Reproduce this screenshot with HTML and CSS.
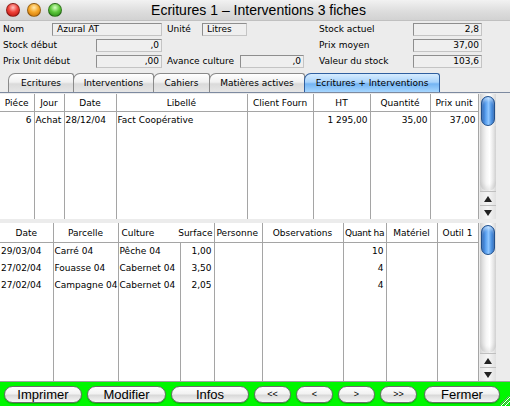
FILE: index.html
```html
<!DOCTYPE html>
<html>
<head>
<meta charset="utf-8">
<link rel="stylesheet" href="styles.css">
</head>
<body>
<div class="window">
  <div class="titlebar">
    <div class="lights">
      <span class="light red"></span>
      <span class="light yellow"></span>
      <span class="light green"></span>
    </div>
    <div class="title">Ecritures 1 – Interventions 3 fiches</div>
  </div>

  <div class="form">
    <span class="lbl r1 c-nom">Nom</span>
    <span class="fld r1 f-nom">Azural AT</span>
    <span class="lbl r1 c-unite">Unité</span>
    <span class="fld r1 f-unite">Litres</span>
    <span class="lbl r1 c-right">Stock actuel</span>
    <span class="fld num r1 f-right">2,8</span>

    <span class="lbl r2 c-left2">Stock début</span>
    <span class="fld num r2 f-left2">,0</span>
    <span class="lbl r2 c-right">Prix moyen</span>
    <span class="fld num r2 f-right">37,00</span>

    <span class="lbl r3 c-left2">Prix Unit début</span>
    <span class="fld num r3 f-left2">,00</span>
    <span class="lbl r3 c-avance">Avance culture</span>
    <span class="fld num r3 f-avance">,0</span>
    <span class="lbl r3 c-right">Valeur du stock</span>
    <span class="fld num r3 f-right">103,6</span>
  </div>

  <div class="tabs">
    <span class="tab t1">Ecritures</span>
    <span class="tab t2">Interventions</span>
    <span class="tab t3">Cahiers</span>
    <span class="tab t4">Matières actives</span>
    <span class="tab t5 active">Ecritures + Interventions</span>
  </div>

  <div class="pane pane-top">
    <table class="grid">
      <colgroup>
        <col style="width:34px"><col style="width:30px"><col style="width:52px"><col style="width:131px">
        <col style="width:66px"><col style="width:57px"><col style="width:60px"><col style="width:48px">
      </colgroup>
      <thead>
        <tr><th>Piéce</th><th>Jour</th><th>Date</th><th>Libellé</th><th>Client Fourn</th><th>HT</th><th>Quantité</th><th>Prix unit</th></tr>
      </thead>
      <tbody>
        <tr><td class="n">6</td><td>Achat</td><td>28/12/04</td><td>Fact Coopérative</td><td></td><td class="n">1 295,00</td><td class="n">35,00</td><td class="n">37,00</td></tr>
        <tr class="fill"><td></td><td></td><td></td><td></td><td></td><td></td><td></td><td></td></tr>
      </tbody>
    </table>
    <div class="scroll">
      <div class="thumb"></div>
      <div class="track"></div>
      <div class="arrow up"></div>
      <div class="arrow down"></div>
    </div>
  </div>

  <div class="pane pane-bottom">
    <table class="grid">
      <colgroup>
        <col style="width:53px"><col style="width:65px"><col style="width:62px"><col style="width:34px"><col style="width:48px">
        <col style="width:81px"><col style="width:43px"><col style="width:51px"><col style="width:41px">
      </colgroup>
      <thead>
        <tr><th>Date</th><th>Parcelle</th><th colspan="2" class="split"><span>Culture</span><span>Surface</span></th><th class="l">Personne</th><th>Observations</th><th class="q">Quant ha</th><th>Matériel</th><th>Outil 1</th></tr>
      </thead>
      <tbody>
        <tr><td>29/03/04</td><td>Carré 04</td><td>Pêche 04</td><td class="n">1,00</td><td></td><td></td><td class="n">10</td><td></td><td></td></tr>
        <tr><td>27/02/04</td><td>Fouasse 04</td><td>Cabernet 04</td><td class="n">3,50</td><td></td><td></td><td class="n">4</td><td></td><td></td></tr>
        <tr><td>27/02/04</td><td>Campagne 04</td><td>Cabernet 04</td><td class="n">2,05</td><td></td><td></td><td class="n">4</td><td></td><td></td></tr>
        <tr class="fill"><td></td><td></td><td></td><td></td><td></td><td></td><td></td><td></td><td></td></tr>
      </tbody>
    </table>
    <div class="scroll">
      <div class="thumb"></div>
      <div class="track"></div>
      <div class="arrow up"></div>
      <div class="arrow down"></div>
    </div>
  </div>

  <div class="toolbar">
    <span class="btn w-big">Imprimer</span>
    <span class="btn w-big2">Modifier</span>
    <span class="btn w-big">Infos</span>
    <span class="btn w-nav">&lt;&lt;</span>
    <span class="btn w-nav">&lt;</span>
    <span class="btn w-nav">&gt;</span>
    <span class="btn w-nav">&gt;&gt;</span>
    <span class="btn w-close">Fermer</span>
  </div>

  <svg class="grip" width="13" height="13" viewBox="0 0 13 13">
    <path d="M12 3 L3 12 M12 7 L7 12 M12 11 L11 12" stroke="#8a8a8a" stroke-width="1"/>
    <path d="M13 4 L4 13 M13 8 L8 13" stroke="#ffffff" stroke-width="1"/>
  </svg>
</div>
</body>
</html>
```

FILE: styles.css
```css
* { box-sizing: border-box; }
html, body { margin: 0; padding: 0; }
body {
  width: 510px;
  height: 406px;
  overflow: hidden;
  background: #ececec;
  font-family: "DejaVu Sans", "Liberation Sans", sans-serif;
  font-size: 9px;
  color: #000;
}
.window {
  position: relative;
  width: 510px;
  height: 406px;
  display: flex;
  flex-direction: column;
  background: #ececec;
}

/* Title bar */
.titlebar {
  height: 21px;
  display: flex;
  align-items: center;
  position: relative;
  background: linear-gradient(#f2f2f2, #dcdcdc 60%, #d2d2d2);
  border-bottom: 1px solid #c0c0c0;
}
.lights {
  display: flex;
  gap: 7px;
  padding-left: 6px;
}
.light {
  width: 14px;
  height: 14px;
  border-radius: 50%;
  display: block;
  border: 1px solid rgba(0,0,0,0.35);
}
.light.red { background: radial-gradient(circle at 50% 30%, #ffc4c0 0%, #f0423a 45%, #b00d08 100%); }
.light.yellow { background: radial-gradient(circle at 50% 30%, #ffeab0 0%, #f6a82a 45%, #c46a00 100%); }
.light.green { background: radial-gradient(circle at 50% 30%, #d6ffc0 0%, #5ec83c 45%, #1f7d0e 100%); }
.title {
  flex: 1;
  text-align: center;
  font-family: "Liberation Sans", sans-serif;
  font-size: 14px;
  margin-left: -55px;
  padding-top: 1px;
}

/* Form */
.form {
  display: grid;
  padding: 2px 0 0 3px;
  grid-template-columns: 49px 44px 66px 5px 35px 38px 7px 57px 15px 94px 69px;
  grid-template-rows: 13px 13px 13px;
  row-gap: 3px;
  height: 50px;
}
.lbl { line-height: 12px; white-space: nowrap; }
.fld {
  height: 13px;
  border: 1px solid #8e8e8e;
  border-right-color: #c4c4c4;
  border-bottom-color: #c4c4c4;
  background: #efefef;
  line-height: 11px;
  padding: 0 2px 0 4px;
  white-space: nowrap;
  overflow: hidden;
}
.fld.num { text-align: right; }
.r1 { grid-row: 1; }
.r2 { grid-row: 2; }
.r3 { grid-row: 3; }
.c-nom { grid-column: 1; }
.f-nom { grid-column: 2 / 4; }
.c-unite { grid-column: 5; }
.f-unite { grid-column: 6 / 8; }
.c-right { grid-column: 10; }
.f-right { grid-column: 11; }
.c-left2 { grid-column: 1 / 3; }
.f-left2 { grid-column: 3; }
.c-avance { grid-column: 5 / 7; }
.f-avance { grid-column: 7 / 9; }

/* Tabs */
.tabs {
  display: flex;
  height: 22px;
  padding: 3px 0 0 8px;
  align-items: flex-end;
  border-bottom: 1px solid #7d8aa0;
  font-size: 9px;
}
.tab {
  height: 19px;
  display: flex;
  align-items: center;
  justify-content: center;
  border: 1px solid #8a8a8a;
  border-bottom: none;
  border-radius: 7px 3px 0 0;
  background: linear-gradient(#ffffff, #f0f0f0 45%, #dadada 55%, #e6e6e6);
  margin-right: -1px;
}
.t1 { width: 66px; }
.t2 { width: 81px; }
.t3 { width: 57px; }
.t4 { width: 96px; }
.t5 { width: 136px; }
.tab.active {
  border-color: #2f5f9f;
  background: linear-gradient(#d6ecff, #a9d3fb 45%, #74b4f3 55%, #a6d6ff);
}

/* Tables */
.pane {
  display: flex;
  margin-top: 1px;
}
.pane-top { height: 126px; }
.pane-bottom { height: 158px; margin-top: 4px; }
.grid {
  width: 478px;
  height: 100%;
  table-layout: fixed;
  border-collapse: collapse;
  background: #fff;
  font-size: 9px;
}
.grid th {
  font-weight: normal;
  height: 18px;
  padding: 0 2px;
  text-align: center;
  white-space: nowrap;
  border-right: 1px solid #a5a5a5;
  border-bottom: 1px solid #a5a5a5;
  overflow: hidden;
}
.pane-bottom .grid th { height: 19px; }
.grid th.l { text-align: left; }
.grid th.q { padding: 0 1px; letter-spacing: -0.3px; }
.grid th.split { padding: 0 1px 0 3px; }
.grid th.split span { display: inline-block; }
.grid th.split span:first-child { float: left; }
.grid th.split span:last-child { float: right; }
.grid td {
  height: 16px;
  padding: 0 2px 0 1px;
  white-space: nowrap;
  overflow: hidden;
  border-right: 1px solid #a5a5a5;
  vertical-align: middle;
}
.pane-bottom .grid td { height: 17px; }
.grid td.n { text-align: right; }
.grid tr.fill td { height: auto; }
.pane-bottom .grid tr.fill td { height: auto; }

/* Scrollbar */
.scroll {
  width: 16px;
  display: flex;
  flex-direction: column;
  background: linear-gradient(90deg, #d2d2d2, #f6f6f6 40%, #ffffff 60%, #d8d8d8);
  margin-left: 1px;
}
.thumb {
  height: 30px;
  margin: 2px 1px 0 1px;
  border-radius: 7px;
  border: 1px solid #21508c;
  background: linear-gradient(90deg, #1e5cb0, #5aa0ef 30%, #8ec6ff 55%, #3c84d8 85%, #1f58a8);
  box-shadow: inset 0 3px 3px rgba(255,255,255,0.45);
}
.track {
  flex: 1;
  border-radius: 0 0 8px 8px;
  box-shadow: inset 0 -4px 4px rgba(0,0,0,0.08);
}
.arrow {
  height: 14px;
  background: linear-gradient(90deg, #e6e6e6, #f6f6f6 50%, #e0e0e0);
  border-top: 1px solid #bfbfbf;
  position: relative;
}
.arrow::after {
  content: "";
  position: absolute;
  left: 4px;
  top: 4px;
  border-left: 4px solid transparent;
  border-right: 4px solid transparent;
}
.arrow.up::after { border-bottom: 6px solid #222; }
.arrow.down::after { border-top: 6px solid #222; }

/* Toolbar */
.toolbar {
  margin-top: auto;
  height: 25px;
  background: #00f700;
  display: flex;
  gap: 5px;
  padding: 4px 0 0 4px;
  border-top: 1px solid #a0a0a0;
}
.btn {
  height: 17px;
  border: 1px solid #6c6c6c;
  border-radius: 9px;
  background: linear-gradient(#ffffff, #f2f2f2 45%, #d9d9d9 55%, #f6f6f6);
  font-family: "Liberation Sans", sans-serif;
  font-size: 13px;
  line-height: 15px;
  text-align: center;
  box-shadow: 0 1px 1px rgba(0,0,0,0.25);
}
.w-big { width: 78px; }
.w-big2 { width: 79px; }
.w-nav { width: 37px; font-size: 9px; }
.w-close { width: 76px; margin-left: 2px; }

.grip {
  position: absolute;
  right: 0;
  bottom: 0;
}
```
